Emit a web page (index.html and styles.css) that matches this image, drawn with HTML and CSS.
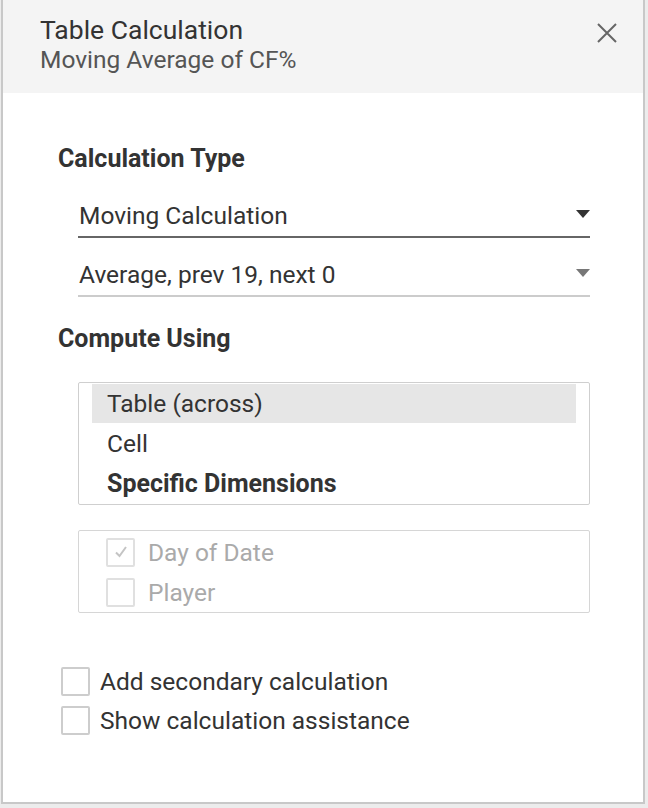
FILE: index.html
```html
<!DOCTYPE html>
<html lang="en">
<head>
<meta charset="utf-8">
<title>Table Calculation</title>
<link rel="stylesheet" href="styles.css">
</head>
<body>
<div class="dialog">
  <div class="header">
    <div class="titles">
      <div class="title">Table Calculation</div>
      <div class="subtitle">Moving Average of CF%</div>
    </div>
    <svg class="close" width="20" height="20" viewBox="0 0 20 20"><path d="M1 1 L19 19 M19 1 L1 19" stroke="#666" stroke-width="2" fill="none"/></svg>
  </div>
  <div class="content">
    <div class="heading h1">Calculation Type</div>
    <div class="select sel1">
      <span>Moving Calculation</span>
      <span class="arrow dark"></span>
    </div>
    <div class="select sel2">
      <span>Average, prev 19, next 0</span>
      <span class="arrow grey"></span>
    </div>
    <div class="heading h2">Compute Using</div>
    <div class="listbox">
      <div class="row selected">Table (across)</div>
      <div class="row">Cell</div>
      <div class="row bold">Specific Dimensions</div>
    </div>
    <div class="dims">
      <div class="dim"><span class="cb disabled checked"><svg width="16" height="14" viewBox="0 0 16 14"><path d="M3 7.5 L6.5 11 L13 2" stroke="#c4c4c4" stroke-width="2" fill="none"/></svg></span><span>Day of Date</span></div>
      <div class="dim"><span class="cb disabled"></span><span>Player</span></div>
    </div>
    <div class="options">
      <div class="opt"><span class="cb"></span><span>Add secondary calculation</span></div>
      <div class="opt"><span class="cb"></span><span>Show calculation assistance</span></div>
    </div>
  </div>
</div>
</body>
</html>
```
FILE: styles.css
```css
* { box-sizing: border-box; }
html, body { margin: 0; padding: 0; }
body {
  background: #ececec;
  font-family: Roboto, "Liberation Sans", sans-serif;
  color: #333;
  width: 648px;
  height: 808px;
  overflow: hidden;
}
.dialog {
  margin-left: 1px;
  width: 644px;
  height: 804px;
  border: 2px solid #c8c8c8;
  border-top: none;
  background: #fff;
  display: flex;
  flex-direction: column;
}
.header {
  background: #f4f4f4;
  height: 93px;
  padding: 14px 26px 0 37px;
  display: flex;
  justify-content: space-between;
  align-items: flex-start;
}
.title {
  font-size: 26.5px;
  line-height: 31px;
  color: #333;
}
.subtitle {
  font-size: 24.5px;
  line-height: 30px;
  color: #555;
}
.close { margin-top: 9px; }
.content {
  padding: 51px 0 0 55px;
  display: flex;
  flex-direction: column;
}
.heading {
  font-size: 25px;
  line-height: 30px;
  font-weight: bold;
  color: #333;
}
.select {
  margin-left: 20px;
  width: 512px;
  font-size: 24.5px;
  line-height: 30px;
  padding: 0 0 5px 1px;
  display: flex;
  justify-content: space-between;
  align-items: center;
}
.sel1 { margin-top: 27px; border-bottom: 2px solid #666; }
.sel2 { margin-top: 22px; border-bottom: 2px solid #ccc; }
.arrow {
  width: 0; height: 0;
  border-left: 7px solid transparent;
  border-right: 7px solid transparent;
  margin-bottom: 4px;
}
.arrow.dark { border-top: 8px solid #333; }
.arrow.grey { border-top: 8px solid #777; }
.h2 { margin-top: 27px; }
.listbox {
  margin: 28px 0 0 20px;
  width: 512px;
  border: 1px solid #cfcfcf;
  border-radius: 2px;
  padding: 1px 13px 0;
}
.row {
  height: 40px;
  line-height: 40px;
  font-size: 24.5px;
  padding-left: 15px;
}
.row.selected { background: #e6e6e6; height: 39px; line-height: 39px; margin-bottom: 1px; }
.row.bold { font-weight: bold; font-size: 25px; }
.dims {
  margin: 25px 0 0 20px;
  width: 512px;
  border: 1px solid #d6d6d6;
  border-radius: 2px;
  padding: 1px 0 0 27px;
}
.dim {
  height: 40px;
  display: flex;
  align-items: center;
  font-size: 24.5px;
  color: #aaa;
  gap: 13px;
}
.cb {
  width: 29px;
  height: 29px;
  border: 2px solid #cdcdcd;
  border-radius: 2px;
  display: flex;
  align-items: center;
  justify-content: center;
  flex: none;
}
.cb.disabled { border-color: #e0e0e0; }
.options {
  margin: 49px 0 0 3px;
  display: flex;
  flex-direction: column;
}
.opt {
  height: 39px;
  display: flex;
  align-items: center;
  gap: 10px;
  font-size: 24.5px;
  color: #333;
}
```
